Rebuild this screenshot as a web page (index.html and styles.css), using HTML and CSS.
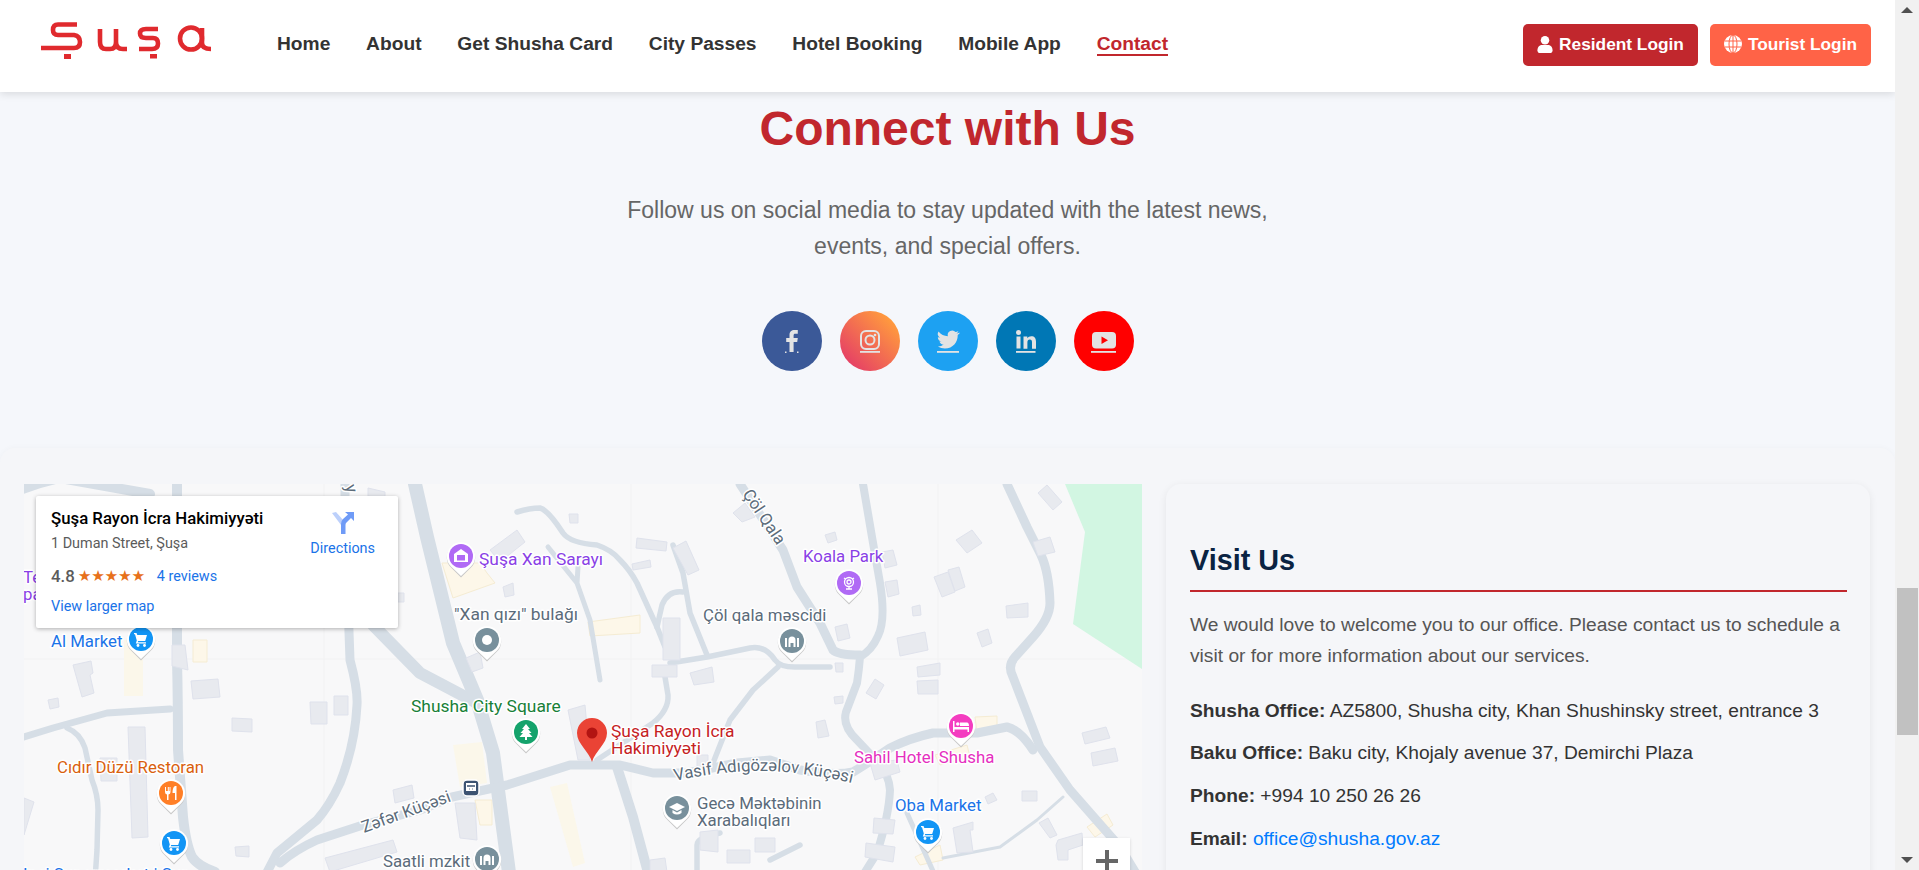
FILE: index.html
```html
<!DOCTYPE html>
<html lang="en">
<head>
<meta charset="utf-8">
<title>Contact - Shusha</title>
<link rel="stylesheet" href="styles.css">
</head>
<body>
<div class="page">
  <div class="main">
    <header class="header">
      <a class="logo" href="#" aria-label="Şuşa">
        <svg class="logo-svg" viewBox="30 12 190 60" width="190" height="60">
          <g fill="none" stroke="#e02a2e" stroke-width="4.600">
            <path d="M77 24.500H58Q53 24.500 53 30Q53 35 58 35H74Q80 36 80 42Q80 48 74 48H41"/>
            <path d="M100 29V42Q100 49 106 49H110Q116 49 116 42V29M116 42Q116 49 123 49H127"/>
            <path d="M158 29H146Q140 29 140 33.500Q140 38 146 38H153Q158 38 158 43.500Q158 49 152 49H139"/>
            <circle cx="191" cy="38.500" r="11"/>
            <path d="M202 28V43Q202 49 211 49"/>
          </g>
          <rect x="64" y="54" width="7" height="5" fill="#e02a2e"/>
          <rect x="150" y="54" width="7" height="4.500" fill="#e02a2e"/>
        </svg>
      </a>
      <nav class="nav">
        <a href="#">Home</a>
        <a href="#">About</a>
        <a href="#">Get Shusha Card</a>
        <a href="#">City Passes</a>
        <a href="#">Hotel Booking</a>
        <a href="#">Mobile App</a>
        <a href="#" class="active">Contact</a>
      </nav>
      <div class="logins">
        <a href="#" class="btn btn-res">
          <svg viewBox="0 0 16 18" width="16" height="17"><circle cx="8" cy="4.500" r="4.500" fill="#fff"/><path d="M0 15c0-3.500 2.500-5.500 5-5.500h6c2.500 0 5 2 5 5.500 0 1.800-1 3-2.500 3h-11C1 18 0 16.800 0 15z" fill="#fff"/></svg>
          Resident Login
        </a>
        <a href="#" class="btn btn-tour">
          <svg viewBox="0 0 18 18" width="18" height="18"><circle cx="9" cy="9" r="9" fill="#fff"/><g fill="none" stroke="#ff6347" stroke-width="1"><ellipse cx="9" cy="9" rx="4" ry="9"/><path d="M9 0v18M.5 6h17M.5 12h17"/></g></svg>
          Tourist Login
        </a>
      </div>
    </header>

    <section class="connect">
      <h2 class="connect-title">Connect with Us</h2>
      <p class="connect-text">Follow us on social media to stay updated with the latest news,<br>events, and special offers.</p>
      <div class="socials">
        <a href="#" class="soc fb" aria-label="Facebook"><svg viewBox="0 0 60 60" width="60" height="60"><path class="ic" d="M27.500 41V31h-3.300v-4h3.300v-3c0-3.500 2-5 5-5h3.300v3.800H33.300c-1.300 0-1.700.6-1.700 1.800V27h4.200l-.6 4h-3.600v10z"/><path class="ic" d="M23 40.500h1.500v1.500H23zM35 40.500h1.500v1.500H35z"/></svg></a>
        <a href="#" class="soc ig" aria-label="Instagram"><svg viewBox="0 0 60 60" width="60" height="60"><g fill="none" stroke="#e3e3e3" stroke-width="2"><rect x="21" y="20" width="18" height="18" rx="5"/><circle cx="30" cy="29" r="4.500"/></g><circle class="ic" cx="35" cy="24" r="1.300"/><rect class="ic" x="20" y="40" width="20" height="1.800"/></svg></a>
        <a href="#" class="soc tw" aria-label="Twitter"><svg viewBox="0 0 60 60" width="60" height="60"><path class="ic" transform="translate(19 17.500) scale(.92)" d="M23.950 4.570a10 10 0 0 1-2.820.77 4.960 4.960 0 0 0 2.160-2.720 9.900 9.900 0 0 1-3.130 1.190 4.920 4.920 0 0 0-8.380 4.480A13.980 13.980 0 0 1 1.640 3.160a4.920 4.920 0 0 0 1.520 6.570 4.900 4.900 0 0 1-2.230-.61v.06a4.920 4.920 0 0 0 3.950 4.830 5 5 0 0 1-2.220.08 4.930 4.930 0 0 0 4.600 3.420A9.870 9.870 0 0 1 .96 19.540a14 14 0 0 0 7.550 2.210c9.050 0 14-7.500 14-13.980 0-.21 0-.42-.02-.63a9.940 9.940 0 0 0 2.460-2.550z"/><rect class="ic" x="19" y="40" width="22" height="1.800"/></svg></a>
        <a href="#" class="soc li" aria-label="LinkedIn"><svg viewBox="0 0 60 60" width="60" height="60"><circle class="ic" cx="22.500" cy="21.500" r="2.500"/><rect class="ic" x="20.500" y="25.500" width="4" height="12"/><path class="ic" d="M27.500 25.500h3.800v1.700c.8-1.200 2.200-2 4-2 3.300 0 4.700 2 4.700 5.500v7h-4v-6.300c0-1.800-.6-2.800-2.200-2.800-1.700 0-2.400 1.100-2.400 2.800v6.300h-3.900z"/><rect class="ic" x="20" y="40" width="19.500" height="1.800"/></svg></a>
        <a href="#" class="soc yt" aria-label="YouTube"><svg viewBox="0 0 60 60" width="60" height="60"><rect class="ic" x="18" y="21" width="24" height="16.500" rx="4"/><path d="M27.500 25.500l6.500 3.700-6.500 3.700z" fill="#f00"/><rect class="ic" x="17" y="40" width="25" height="1.800"/></svg></a>
      </div>
    </section>

    <section class="visit">
      <div class="map">
        <svg class="map-svg" viewBox="24 484 1118 480" width="1118" height="480">
          <defs>
            <g id="pin">
              <path d="M0 20.500L-9.500 11A14.200 14.200 0 1 1 9.500 11z" fill="#c8c8c8" transform="translate(0 1)"/>
              <path d="M0 20L-10 10.500A14.200 14.200 0 1 1 10 10.500z" fill="#fff"/>
            </g>
            <g id="cart" fill="#fff">
              <path d="M-7-6h2.500l.8 2h9.700l-1.800 6h-7l-.4 1.200h8.200v1.400h-10.200l1-3L-6-4.700h-1z"/>
              <circle cx="-3" cy="6.500" r="1.400"/><circle cx="3.500" cy="6.500" r="1.400"/>
            </g>
            <g id="mosque" fill="#fff">
              <path d="M-7-3h2V6h-2zM5-3h2V6H5zM-3.500-1a3.500 3.500 0 0 1 7 0V6h-2V2h-3v4h-2z"/>
            </g>
          </defs>

          <rect x="24" y="484" width="1118" height="480" fill="#f8f8f9"/>
          <path class="tile" d="M631 484V964M938 484V964M324 484V964M24 659H1142"/>

          <polygon class="green" points="1065,484 1085,532 1073,624 1142,669 1142,484"/>

          <g class="yel">
            <polygon class="yel-soft" points="124,640 143,640 143,696 124,696"/>
            <polygon points="193,640 207,640 207,662 193,662"/>
            <polygon points="442,563 480,563 487,573 495,583 453,598"/>
            <polygon points="588,622 640,615 640,633 590,636"/>
            <polygon class="yel-soft" points="453,745 482,742 487,783 460,787"/>
            <polygon points="475,800 492,800 492,825 480,825"/>
            <polygon class="yel-soft" points="550,787 567,783 585,863 573,867"/>
            <polygon points="975,717 997,716 997,731 977,732"/>
            <polygon points="935,755 967,745 970,757 940,765"/>
            <polygon points="915,857 940,845 943,860 920,865"/>
            <polygon points="1087,827 1107,814 1113,825 1095,837"/>
          </g>

          <g class="roads">
            <path class="r10" d="M20 490Q40 482 60 478L150 494"/>
            <path class="r10" d="M177 484V660Q178 700 178 750L183 817Q186 845 192 857Q198 866 215 872"/>
            <path class="r7" d="M24 737L53 728L107 713L170 709"/>
            <path class="r6" d="M67 728Q80 733 85 748L92 780Q98 795 98 810L97 850L95 880"/>
            <path class="r9" d="M345 484V520L350 660Q358 690 357 705Q355 745 340 783Q330 805 317 820L277 853L263 880"/>
            <path class="r12" d="M373 625L420 673L477 703"/>
            <path class="r14" d="M415 484L427 537L453 643L477 700L493 753L510 880"/>
            <path class="r9" d="M280 863Q295 850 317 840L363 825L420 810L452 797L507 785L570 765H620L653 773H687L737 763L770 760L800 770Q835 776 853 772Q870 762 890 748Q910 738 933 733H977L1007 727Q1020 730 1033 750"/>
            <path class="r6" d="M517 512Q530 508 540 508Q548 510 563 533Q570 543 597 545Q612 550 620 560Q630 570 637 583L657 627L665 647"/>
            <path class="r5" d="M548 547L577 583L590 620L600 680M578 567L577 583"/>
            <path class="r6" d="M673 545L683 573L690 613L707 655"/>
            <path class="r6" d="M683 592Q668 590 662 605L657 627"/>
            <path class="r6" d="M670 663L707 657L750 648Q765 645 775 660Q780 667 795 667H830"/>
            <path class="r6" d="M665 677L668 695Q669 710 653 723L597 760"/>
            <path class="r6" d="M778 667L753 690L730 720L713 763"/>
            <path class="r10" d="M617 767L633 817L650 880"/>
            <path class="r6" d="M697 880V845Q697 837 720 833"/>
            <path class="r6" d="M770 860L800 845"/>
            <path class="r9" d="M740 484L783 550L797 587L820 623L833 650Q838 655 860 655"/>
            <path class="r8" d="M863 484L872 537L880 583Q886 620 878 636Q872 650 860 657Q859 670 857 683L846 712Q842 726 857 740L873 757Q889 772 890 790Q889 815 877 853L860 880"/>
            <path class="r9" d="M1007 484L1027 527L1041 555Q1049 572 1050 603Q1050 618 1033 637L1015 657Q1007 666 1013 677L1040 747L1070 790L1120 847L1140 880"/>
            <path class="r3" d="M1063 797L1037 820L1000 847L943 858"/>
            <path class="r5" d="M907 813L937 880"/>
          </g>

          <g class="bld">
            <polygon points="368,488 385,492 385,500 368,496"/>
            <polygon points="172,645 185,645 188,670 172,666"/>
            <polygon points="73,665 91,661 93,673 90,675 94,693 82,697"/>
            <polygon points="48,700 58,698 59,707 50,709"/>
            <polygon points="191,681 218,679 220,697 193,699"/>
            <polygon points="232,718 252,719 252,732 232,731"/>
            <polygon points="310,702 327,702 327,724 311,724"/>
            <polygon points="334,696 348,696 348,715 334,715"/>
            <polygon points="393,790 412,785 414,798 395,803"/>
            <polygon points="235,847 249,846 249,857 236,856"/>
            <polygon points="128,727 145,727 148,837 132,838"/>
            <polygon points="100,758 117,758 117,781 101,781"/>
            <polygon points="24,798 34,802 24,835"/>
            <polygon points="325,858 393,840 397,852 330,872"/>
            <polygon points="398,593 404,593 404,602 398,602"/>
            <polygon points="490,550 517,530 525,542 500,562"/>
            <polygon points="569,514 578,514 578,523 570,523"/>
            <polygon points="637,538 667,542 666,551 636,548"/>
            <polygon points="632,564 650,560 651,567 633,570"/>
            <polygon points="503,587 513,583 514,595 505,597"/>
            <polygon points="663,618 680,618 680,660 663,660"/>
            <polygon points="652,665 677,665 677,677 652,677"/>
            <polygon points="690,673 712,667 714,682 694,685"/>
            <polygon points="673,548 686,541 699,570 688,575"/>
            <polygon points="733,513 745,503 755,517 742,522"/>
            <polygon points="466,658 480,652 483,668 472,672"/>
            <polygon points="568,710 585,705 590,760 578,760"/>
            <polygon points="455,803 475,803 477,840 460,838"/>
            <polygon points="700,832 718,830 718,852 700,850"/>
            <polygon points="755,838 775,838 775,852 755,852"/>
            <polygon points="727,850 750,850 750,863 727,863"/>
            <polygon points="650,860 665,858 667,872 650,872"/>
            <polygon points="697,755 708,755 708,767 697,767"/>
            <polygon points="1038,493 1047,485 1062,502 1053,510"/>
            <polygon points="956,540 972,530 982,543 967,553"/>
            <polygon points="1033,542 1050,537 1055,552 1038,556"/>
            <polygon points="825,535 835,532 837,540 828,543"/>
            <polygon points="882,552 893,550 897,565 885,568"/>
            <polygon points="885,582 897,580 899,594 888,597"/>
            <polygon points="934,577 948,572 955,592 942,597"/>
            <polygon points="948,570 959,567 965,587 955,591"/>
            <polygon points="912,607 920,605 921,615 913,616"/>
            <polygon points="1006,606 1028,603 1028,617 1007,618"/>
            <polygon points="835,627 847,624 850,638 838,641"/>
            <polygon points="897,638 925,632 928,650 900,656"/>
            <polygon points="977,633 988,629 992,643 982,647"/>
            <polygon points="835,663 843,663 843,672 836,672"/>
            <polygon points="917,667 940,663 940,675 918,677"/>
            <polygon points="917,681 938,680 938,694 918,694"/>
            <polygon points="875,679 884,685 876,699 866,693"/>
            <polygon points="834,697 843,696 843,703 835,704"/>
            <polygon points="816,722 825,720 829,736 818,738"/>
            <polygon points="1082,733 1106,727 1110,738 1085,744"/>
            <polygon points="1091,753 1115,748 1118,761 1093,766"/>
            <polygon points="1022,791 1037,791 1037,801 1022,801"/>
            <polygon points="985,797 993,793 997,800 988,804"/>
            <polygon points="1039,823 1048,818 1057,835 1050,838"/>
            <polygon points="1058,840 1082,833 1083,845 1068,850 1068,860 1058,860 1056,845"/>
            <polygon points="953,828 973,822 973,830 970,830 973,852 957,853"/>
            <polygon points="874,818 895,820 893,834 873,833"/>
            <polygon points="866,843 895,847 893,862 865,857"/>
            <polygon points="870,763 897,760 900,772 875,780"/>
          </g>

          <g class="lbl">
            <text class="purple" x="23" y="583">Te</text>
            <text class="purple" x="23" y="600">pa</text>
            <text class="blue" x="51" y="647">Al Market</text>
            <text class="blue" x="23" y="880">Inci Supermarket | Sup</text>
            <text class="purple big" x="479" y="565">Şuşa Xan Sarayı</text>
            <text class="grey big" x="454" y="620">"Xan qızı" bulağı</text>
            <text class="green-t big" x="411" y="712">Shusha City Square</text>
            <text class="redt big" x="611" y="737">Şuşa Rayon İcra</text>
            <text class="redt big" x="611" y="754">Hakimiyyəti</text>
            <text class="purple" x="803" y="562">Koala Park</text>
            <text class="grey" x="703" y="621">Çöl qala məscidi</text>
            <text class="grey" x="697" y="809">Gecə Məktəbinin</text>
            <text class="grey" x="697" y="826">Xarabalıqları</text>
            <text class="pink" x="854" y="763">Sahil Hotel Shusha</text>
            <text class="blue" x="895" y="811">Oba Market</text>
            <text class="orange" x="57" y="773">Cıdır Düzü Restoran</text>
            <text class="grey" x="383" y="867">Saatli mzkit</text>
            <text class="grey" transform="translate(364 833) rotate(-20)">Zəfər Küçəsi</text>
            <text class="grey" transform="translate(742 494) rotate(56)">Çöl Qala</text>
            <text class="grey" transform="translate(345 486) rotate(75)">y</text>
            <path id="vasif" d="M675 781Q720 771 760 771T856 784" fill="none" stroke="none"/>
            <text class="grey"><textPath href="#vasif">Vasif Adıgözəlov Küçəsi</textPath></text>
          </g>

          <g transform="translate(141 639)"><use href="#pin"/><circle r="12" fill="#1295f5"/><use href="#cart"/></g>
          <g transform="translate(171 793)"><use href="#pin"/><circle r="12" fill="#ff7f27"/><path d="M-6-6v5q0 2 2 2.500V7h1.500V1.500q2-.5 2-2.500V-6h-1v4h-.7V-6h-1v4h-.8V-6H-4v4h-1V-6zM4-7c-2 1-2.500 4-2.500 7H4v7h1.500V-7z" fill="#fff"/></g>
          <g transform="translate(174 843)"><use href="#pin"/><circle r="12" fill="#1295f5"/><use href="#cart"/></g>
          <g transform="translate(461 556)"><use href="#pin"/><circle r="12" fill="#b06af5"/><path d="M-7-2L0-7L7-2V6H-7z" fill="#fff"/><rect x="-4" y="-1" width="8" height="5.500" fill="#b06af5"/></g>
          <g transform="translate(487 640)"><use href="#pin"/><circle r="12" fill="#78909c"/><circle r="5" fill="#fff"/></g>
          <g transform="translate(526 732)"><use href="#pin"/><circle r="12" fill="#15a36c"/><path d="M0-8L4-3H2L5.500 1H3L6.500 5H1V8H-1V5H-6.500L-3 1H-5.500L-2-3H-4z" fill="#fff"/></g>
          <g transform="translate(792 641)"><use href="#pin"/><circle r="12" fill="#78909c"/><use href="#mosque"/></g>
          <g transform="translate(849 583)"><use href="#pin"/><circle r="12" fill="#b06af5"/><g fill="none" stroke="#fff" stroke-width="1.300"><circle cy="-1" r="4.500"/><circle cy="-1" r="2"/><path d="M-3 6H3M0 3.500V6M-5-5L-3.500-4M5-5L3.500-4"/></g></g>
          <g transform="translate(677 808)"><use href="#pin"/><circle r="12" fill="#78909c"/><path d="M-8-1L0-5L8-1L0 3z" fill="#fff"/><path d="M-4.500 2V5Q0 8 4.500 5V2L0 4.500z" fill="#fff"/></g>
          <g transform="translate(961 726)"><use href="#pin"/><circle r="12" fill="#f43dc0"/><path d="M-8-5h1.500V1H8V6H6.500V3.500h-13V6H-8zM-5-2a1.800 1.800 0 1 1 3.600 0a1.800 1.800 0 1 1-3.600 0zM-1-3.500H6Q8-3.500 8 0H-1z" fill="#fff"/></g>
          <g transform="translate(928 832)"><use href="#pin"/><circle r="12" fill="#1295f5"/><use href="#cart"/></g>
          <g transform="translate(487 859)"><use href="#pin"/><circle r="12" fill="#78909c"/><use href="#mosque"/></g>
          <g transform="translate(471 788)"><rect x="-8" y="-8" width="16" height="16" rx="4" fill="#3c5372" stroke="#fff" stroke-width="1.500"/><path d="M-5-5H5V3H-5z" fill="#fff"/><path d="M-4-2H4M-2 1h.5M1.500 1H2" stroke="#3c5372" stroke-width="1.500"/></g>

          <g transform="translate(592 733)">
            <path d="M0 29C-3 18-15 11-15 0A15 15 0 0 1 15 0C15 11 3 18 0 29z" fill="#ea4335"/>
            <circle r="5.500" fill="#b31412"/>
          </g>
        </svg>

        <div class="info">
          <div class="info-left">
            <div class="info-title">Şuşa Rayon İcra Hakimiyyəti</div>
            <div class="info-addr">1 Duman Street, Şuşa</div>
            <div class="info-rate"><span class="num">4.8</span><span class="stars">★★★★★</span><a href="#" class="rev">4 reviews</a></div>
            <a href="#" class="larger">View larger map</a>
          </div>
          <a href="#" class="dir">
            <svg viewBox="0 0 24 24" width="24" height="24"><path d="M1 2L5 1L13 10L10 14z" fill="#bcd0fb"/><path d="M10 23V13Q10 10 12 8L17 3.500L14 1H23V10L20 7L15 12Q14.500 13 14.500 14V23z" fill="#6f9bf7"/></svg>
            <span>Directions</span>
          </a>
        </div>

        <div class="zoom-ctl"><svg viewBox="0 0 24 24" width="24" height="24"><path d="M10 1h4v9h9v4h-9v9h-4v-9H1v-4h9z" fill="#666"/></svg></div>
      </div>

      <aside class="card">
        <h3 class="card-title">Visit Us</h3>
        <p class="card-intro">We would love to welcome you to our office. Please contact us to schedule a visit or for more information about our services.</p>
        <p class="card-item"><strong>Shusha Office:</strong> AZ5800, Shusha city, Khan Shushinsky street, entrance 3</p>
        <p class="card-item"><strong>Baku Office:</strong> Baku city, Khojaly avenue 37, Demirchi Plaza</p>
        <p class="card-item"><strong>Phone:</strong> +994 10 250 26 26</p>
        <p class="card-item"><strong>Email:</strong> <a href="#">office@shusha.gov.az</a></p>
      </aside>
    </section>
  </div>

  <div class="scrollbar" aria-hidden="true">
    <span class="arrow-up"></span>
    <span class="thumb"></span>
    <span class="arrow-down"></span>
  </div>
</div>
</body>
</html>
```

FILE: styles.css
```css
* { box-sizing: border-box; }

html, body {
  margin: 0;
  height: 870px;
  overflow: hidden;
}

body {
  background: #f5f7fb;
  font-family: "Liberation Sans", Arial, sans-serif;
  color: #333;
}

a { text-decoration: none; }

.page {
  display: flex;
  height: 870px;
  overflow: hidden;
}

.main {
  flex: 1;
  min-width: 0;
  overflow: hidden;
}

/* header */
.header {
  position: relative;
  z-index: 2;
  display: flex;
  align-items: center;
  height: 92px;
  padding: 0 24px 0 30px;
  background: #fff;
  box-shadow: 0 2px 8px rgba(0, 0, 0, .12);
}

.logo {
  display: block;
  height: 60px;
  margin-top: -8px;
}

.logo-svg { display: block; }

.nav {
  display: flex;
  gap: 35.800px;
  margin-left: 57px;
  margin-top: -3px;
}

.nav a {
  font-size: 19.200px;
  font-weight: 700;
  line-height: 21px;
  color: #333;
  border-bottom: 2px solid transparent;
}

.nav a.active {
  color: #c1272d;
  border-bottom-color: #c1272d;
}

.logins {
  display: flex;
  gap: 12px;
  margin-left: auto;
  margin-top: -2px;
}

.btn {
  display: flex;
  align-items: center;
  gap: 6px;
  height: 42px;
  padding: 0 14px 2px;
  border-radius: 5px;
  color: #fff;
  font-size: 17.300px;
  font-weight: 700;
}

.btn-res { background: #c1272d; }
.btn-tour { background: #ff6347; }

/* connect */
.connect {
  display: flex;
  flex-direction: column;
  align-items: center;
  height: 356px;
  padding-top: 8px;
}

.connect-title {
  margin: 0;
  font-size: 48px;
  line-height: 58px;
  font-weight: 700;
  color: #c1272d;
}

.connect-text {
  margin: 34px 0 0;
  font-size: 23px;
  line-height: 36px;
  text-align: center;
  color: #666;
}

.socials {
  display: flex;
  gap: 18px;
  margin-top: 47px;
}

.soc {
  display: block;
  width: 60px;
  height: 60px;
  border-radius: 50%;
}

.soc svg { display: block; }
.ic { fill: #e3e3e3; }

.fb { background: #3b5998; }
.ig { background: linear-gradient(45deg, #e1306c, #ff9a3e 85%); }
.tw { background: #1da1f2; }
.li { background: #0077b5; }
.yt { background: #f00; }

/* visit section */
.visit {
  display: grid;
  grid-template-columns: 1118px 1fr;
  gap: 24px;
  padding: 36px 25px 0 24px;
  border-radius: 15px 15px 0 0;
  background: #f5f6f9;
  box-shadow: 0 0 6px rgba(0, 0, 0, .03);
}

.map {
  position: relative;
  height: 480px;
  overflow: hidden;
}

.map-svg { display: block; }

.tile { fill: none; stroke: #f2f2f3; stroke-width: 1; }
.green { fill: #d2f6e2; }
.yel polygon { fill: #fdf7e9; stroke: #f5ecd3; stroke-width: 1; }
.yel .yel-soft { fill: #fbf7ea; stroke: none; }
.bld polygon { fill: #e8eaef; stroke: #dfe2ec; stroke-width: 1; }

.roads path { fill: none; stroke: #d6dee6; stroke-linecap: round; stroke-linejoin: round; }
.r3 { stroke-width: 3; }
.r5 { stroke-width: 5; }
.r6 { stroke-width: 5.500; }
.r7 { stroke-width: 7; }
.r8 { stroke-width: 8; }
.r9 { stroke-width: 9; }
.r10 { stroke-width: 10; }
.r12 { stroke-width: 12; }
.r14 { stroke-width: 14; }

.lbl text {
  font-family: Roboto, sans-serif;
  font-size: 16.800px;
  paint-order: stroke;
  stroke: #fff;
  stroke-width: 3px;
  stroke-linejoin: round;
}

.lbl text.big { font-size: 17.400px; }

.purple { fill: #8a3fe6; }
.blue { fill: #1a73e8; }
.grey { fill: #5b6b7a; }
.green-t { fill: #188038; }
.redt { fill: #c5221f; }
.pink { fill: #e52fbf; }
.orange { fill: #d95f0e; }

.info {
  position: absolute;
  left: 12px;
  top: 12px;
  display: flex;
  justify-content: space-between;
  width: 362px;
  height: 132px;
  padding: 12px 15px 0;
  background: #fff;
  border-radius: 2px;
  box-shadow: 0 1px 4px rgba(0, 0, 0, .3);
  font-family: Roboto, sans-serif;
}

.info-title {
  font-size: 16.800px;
  font-weight: 500;
  line-height: 20px;
  color: #000;
}

.info-addr {
  margin-top: 7px;
  font-size: 14.400px;
  line-height: 18px;
  color: #5b5b5b;
}

.info-rate {
  display: flex;
  align-items: center;
  margin-top: 11px;
  height: 24px;
}

.num {
  font-size: 16.800px;
  font-weight: 500;
  color: #5b5b5b;
}

.stars {
  margin-left: 3px;
  font-family: "DejaVu Sans", sans-serif;
  font-size: 15.300px;
  letter-spacing: -.3px;
  color: #e7711b;
}

.rev {
  margin-left: 12px;
  font-size: 14.400px;
  color: #1a73e8;
}

.larger {
  display: block;
  margin-top: 10px;
  font-size: 14.400px;
  line-height: 18px;
  color: #1a73e8;
}

.dir {
  display: flex;
  flex-direction: column;
  align-items: center;
  margin: 3px 8px 0 0;
  font-size: 14.400px;
  color: #1a73e8;
}

.dir span { margin-top: 5px; }

.zoom-ctl {
  position: absolute;
  left: 1059px;
  top: 354px;
  display: flex;
  justify-content: center;
  width: 47px;
  height: 94px;
  padding-top: 11px;
  background: #fff;
  box-shadow: 0 1px 3px rgba(0, 0, 0, .15);
}

.zoom-ctl svg { display: block; }

/* card */
.card {
  height: 480px;
  padding: 57px 23px 0 24px;
  border-radius: 15px 15px 0 0;
  background: #f5f6f9;
  box-shadow: 0 2px 8px rgba(0, 0, 0, .07);
}

.card-title {
  margin: 0;
  padding-bottom: 10.500px;
  border-bottom: 2px solid #c1272d;
  font-size: 28.800px;
  line-height: 38px;
  font-weight: 700;
  color: #0a2342;
}

.card-intro {
  margin: 17px 0 0;
  font-size: 19.200px;
  line-height: 31.500px;
  color: #555;
}

.card-item {
  margin: 12px 0 0;
  font-size: 19.200px;
  line-height: 30.700px;
  color: #333;
}

.card-intro + .card-item { margin-top: 24px; }

.card-item a { color: #007bff; }

/* scrollbar */
.scrollbar {
  position: relative;
  flex: 0 0 24px;
  height: 870px;
  background: #f1f1f1;
}

.arrow-up, .arrow-down {
  position: absolute;
  left: 6px;
  width: 0;
  height: 0;
  border-left: 6px solid transparent;
  border-right: 6px solid transparent;
}

.arrow-up { top: 7px; border-bottom: 6px solid #505050; }
.arrow-down { bottom: 7px; border-top: 6px solid #505050; }

.thumb {
  position: absolute;
  left: 2px;
  right: 1px;
  top: 588px;
  height: 147px;
  background: #c1c1c1;
}
```
